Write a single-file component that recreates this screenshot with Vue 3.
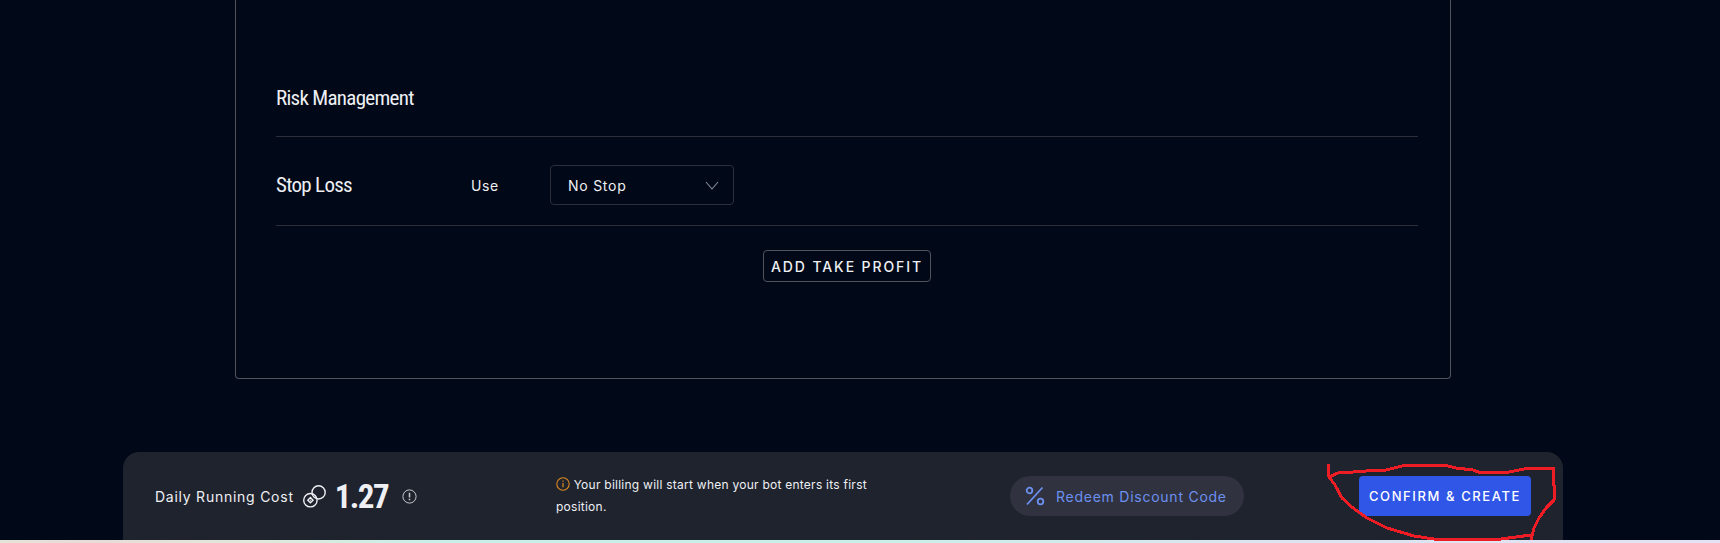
<script setup>
</script>

<template>
  <div class="page">
    <section class="panel">
      <h2 class="section-title">Risk Management</h2>
      <div class="stop-row">
        <span class="stop-label">Stop Loss</span>
        <span class="use-label">Use</span>
        <div class="select">
          <span>No Stop</span>
          <svg class="chevron" width="14" height="9" viewBox="0 0 14 9" fill="none">
            <path d="M1 1l6 7 6-7" stroke="#8a8d99" stroke-width="1.1" />
          </svg>
        </div>
      </div>
      <div class="add-row">
        <button class="add-btn">ADD TAKE PROFIT</button>
      </div>
    </section>

    <footer class="cost-bar">
      <div class="cost">
        <span class="cost-label">Daily Running Cost</span>
        <svg class="coins" width="23" height="23" viewBox="0 0 23 23" fill="none" stroke="#eef0f4" stroke-width="1.4">
          <circle cx="7.4" cy="15.2" r="6.7" />
          <circle cx="15.6" cy="7.4" r="6.6" />
          <path d="M7.4 12.6l2.6 2.6-2.6 2.6-2.6-2.6z" />
          <circle cx="7.4" cy="15.2" r="0.6" fill="#eef0f4" stroke="none" />
        </svg>
        <span class="cost-value">1.27</span>
        <svg class="cost-info" width="15" height="15" viewBox="0 0 15 15" fill="none">
          <circle cx="7.5" cy="7.5" r="6.6" stroke="#c4c6cc" stroke-width="1" />
          <path d="M7.5 3.8v4.6M7.5 9.8v1.4" stroke="#c4c6cc" stroke-width="1.5" />
        </svg>
      </div>
      <p class="billing">
        <svg class="billing-icon" width="14" height="14" viewBox="0 0 14 14" fill="none">
          <circle cx="7" cy="7" r="6.2" stroke="#e08a20" stroke-width="1.1" />
          <path d="M7 6v4.2M7 3.6v1.2" stroke="#e08a20" stroke-width="1.2" />
        </svg>
        Your billing will start when your bot enters its first position.
      </p>
      <div class="discount">
        <svg width="20" height="20" viewBox="0 0 20 20" fill="none" stroke="#6c90f0" stroke-width="1.8">
          <circle cx="4.5" cy="4.5" r="2.8" />
          <circle cx="15.5" cy="15.5" r="2.8" />
          <path d="M17.5 1.5L2 18.5" />
        </svg>
        <span>Redeem Discount Code</span>
      </div>
      <button class="confirm">CONFIRM &amp; CREATE</button>
    </footer>
    <div class="strip"></div>

    <svg class="scribble" width="1720" height="543" viewBox="0 0 1720 543" fill="none" shape-rendering="crispEdges">
      <path d="M1328 464l1 13 9-4 15-1 13-1 20-1 20-5h38l12 3 17 2 8 3 28-1 20-4h24v14l2 7-1 11-8 8-7 10-5 10-3 12" stroke="#ee1c25" stroke-width="3" />
      <path d="M1329 477l6 8 7 13 11 10 14 10 20 10 27 8 20 3h67l30-4" stroke="#ee1c25" stroke-width="3" />
    </svg>
  </div>
</template>

<style scoped>
.page {
  position: relative;
  width: 1720px;
  height: 543px;
  overflow: hidden;
  background: #010817;
  font-family: "Inter", "Open Sans", sans-serif;
  color: #eef0f4;
}
.panel {
  box-sizing: border-box;
  width: 1216px;
  height: 379px;
  margin-left: 235px;
  padding: 0 32px 0 40px;
  border: 1px solid #50525c;
  border-top: 0;
  border-radius: 0 0 4px 4px;
}
.section-title {
  margin: 0;
  padding: 83px 0 23px;
  height: 30px;
  line-height: 30px;
  font-family: "Roboto", sans-serif;
  font-stretch: 75%;
  font-size: 21px;
  font-weight: 400;
  letter-spacing: -0.7px;
  border-bottom: 1px solid #2c2e3a;
  box-sizing: content-box;
}
.stop-row {
  box-sizing: border-box;
  display: flex;
  align-items: center;
  height: 89px;
  padding-top: 8px;
  border-bottom: 1px solid #2c2e3a;
}
.stop-label {
  width: 195px;
  font-family: "Roboto", sans-serif;
  font-stretch: 75%;
  font-size: 21px;
  font-weight: 400;
  letter-spacing: -0.7px;
}
.use-label {
  width: 79px;
  font-size: 14px;
  letter-spacing: 0.6px;
}
.select {
  box-sizing: border-box;
  display: flex;
  align-items: center;
  justify-content: space-between;
  width: 184px;
  height: 40px;
  padding: 0 14px 0 17px;
  border: 1px solid #2c2e3a;
  border-radius: 4px;
  font-size: 14px;
  letter-spacing: 0.75px;
}
.add-row {
  display: flex;
  justify-content: center;
  padding-top: 24px;
}
.add-btn {
  box-sizing: border-box;
  width: 168px;
  height: 32px;
  background: transparent;
  border: 1px solid #50525c;
  border-radius: 4px;
  color: #eef0f4;
  font-family: inherit;
  font-size: 14px;
  font-weight: 500;
  letter-spacing: 1.9px;
  padding: 0;
}
.cost-bar {
  box-sizing: border-box;
  display: flex;
  align-items: center;
  width: 1440px;
  height: 88px;
  margin: 73px 0 0 123px;
  padding: 0 32px;
  background: #1f232d;
  border-radius: 16px 16px 0 0;
}
.cost {
  display: flex;
  align-items: center;
  width: 401px;
}
.cost-label {
  font-size: 14px;
  letter-spacing: 0.75px;
}
.coins {
  margin-left: 9px;
}
.cost-value {
  margin-left: 9px;
  font-family: "Roboto", sans-serif;
  font-stretch: 75%;
  font-size: 33px;
  font-weight: 700;
  letter-spacing: -1.6px;
}
.cost-info {
  margin-left: 14px;
}
.billing {
  width: 320px;
  margin: 0;
  font-size: 12px;
  line-height: 22px;
  letter-spacing: 0.25px;
}
.billing-icon {
  vertical-align: -2px;
}
.discount {
  display: flex;
  align-items: center;
  gap: 11px;
  box-sizing: border-box;
  width: 234px;
  height: 40px;
  margin-left: 134px;
  padding-left: 15px;
  border-radius: 20px;
  background: #30323f;
  color: #6c90f0;
  font-size: 14px;
  letter-spacing: 0.75px;
}
.confirm {
  box-sizing: border-box;
  width: 172px;
  height: 40px;
  margin-left: 115px;
  padding: 0;
  background: #3056e8;
  border: 0;
  border-radius: 4px;
  color: #fff;
  font-family: inherit;
  font-size: 13px;
  font-weight: 500;
  letter-spacing: 1.6px;
}
.strip {
  height: 3px;
  background: linear-gradient(90deg, #e4e4d8, #e8dcd8 5%, #e0e8dc 15%, #c8f0e8 25%, #c8f0e8 50%, #dce4f0 75%, #e4e2f4);
}
.scribble {
  position: absolute;
  left: 0;
  top: 0;
  pointer-events: none;
}
</style>
